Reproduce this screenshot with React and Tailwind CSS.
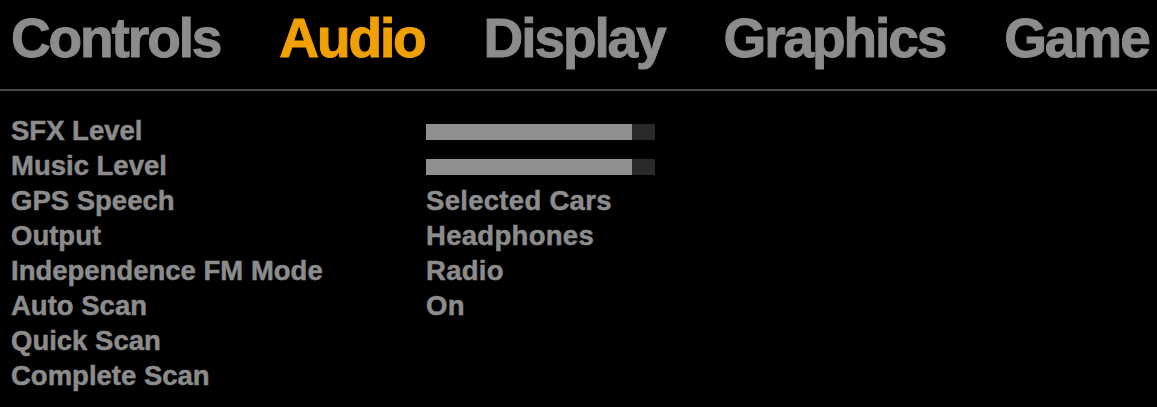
export default function App() {
  const tabs = ["Controls", "Audio", "Display", "Graphics", "Game"];
  const rows = [
    { label: "SFX Level", bar: 206 },
    { label: "Music Level", bar: 206 },
    { label: "GPS Speech", value: "Selected Cars" },
    { label: "Output", value: "Headphones" },
    { label: "Independence FM Mode", value: "Radio" },
    { label: "Auto Scan", value: "On" },
    { label: "Quick Scan" },
    { label: "Complete Scan" },
  ];
  return (
    <div
      className="w-[1157px] h-[407px] bg-black overflow-hidden"
      style={{ fontFamily: '"Liberation Sans", Arial, sans-serif' }}
    >
      <div className="flex gap-[59px] pl-[11px] pt-[11px] h-[89px]">
        {tabs.map((t) => (
          <div
            key={t}
            className={`text-[55px] font-bold leading-none tracking-[-2.1px] [-webkit-text-stroke:1px_currentColor] ${
              t === "Audio" ? "text-[#f0a000]" : "text-[#8c8c8c]"
            }`}
          >
            {t}
          </div>
        ))}
      </div>
      <div className="h-[2px] bg-[#4a4a4a]" />
      <div className="pt-[22px] pl-[11px]">
        {rows.map((r) => (
          <div key={r.label} className="flex items-center h-[35px]">
            <div className="w-[415px] text-[27.5px] font-bold text-[#8c8c8c] leading-none [-webkit-text-stroke:0.5px_currentColor]">
              {r.label}
            </div>
            {r.bar !== undefined && (
              <div className="w-[229px] h-[16px] bg-[#2a2a2a] mt-[3px]">
                <div className="h-full bg-[#8f8f8f]" style={{ width: r.bar }} />
              </div>
            )}
            {r.value && (
              <div className="text-[27.5px] font-bold text-[#8c8c8c] leading-none tracking-[0.3px] [-webkit-text-stroke:0.5px_currentColor]">
                {r.value}
              </div>
            )}
          </div>
        ))}
      </div>
    </div>
  );
}
